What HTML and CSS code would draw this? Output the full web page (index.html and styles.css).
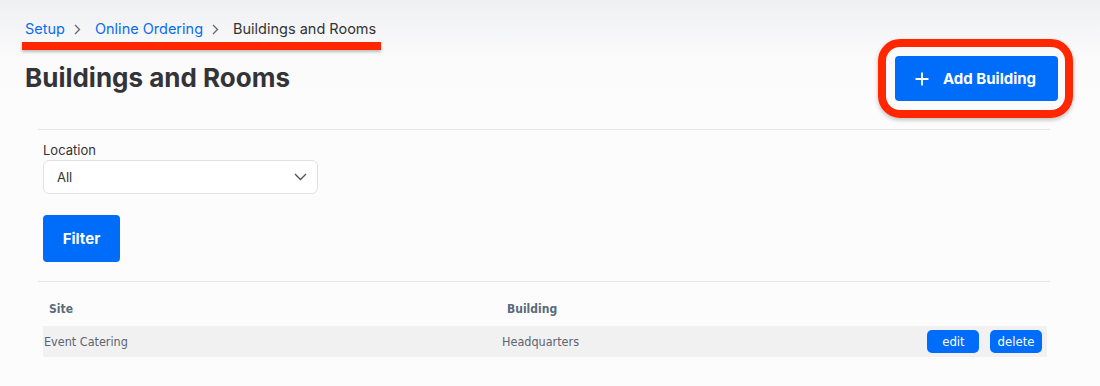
FILE: index.html
```html
<!DOCTYPE html>
<html lang="en">
<head>
  <meta charset="UTF-8">
  <meta name="viewport" content="width=device-width, initial-scale=1.0">
  <title>Buildings and Rooms</title>
  <link rel="stylesheet" href="styles.css">
</head>
<body>
  <div class="page-header">
    <div class="heading">
      <nav class="breadcrumb">
        <a href="#">Setup</a>
        <svg class="sep" width="7" height="11" viewBox="0 0 7 11" aria-hidden="true"><path d="M1 1l4.5 4.5L1 10" stroke="#666" stroke-width="1.3" fill="none"/></svg>
        <a href="#">Online Ordering</a>
        <svg class="sep" width="7" height="11" viewBox="0 0 7 11" aria-hidden="true"><path d="M1 1l4.5 4.5L1 10" stroke="#666" stroke-width="1.3" fill="none"/></svg>
        <span class="current">Buildings and Rooms</span>
      </nav>
      <h1>Buildings and Rooms</h1>
    </div>
    <button class="add-btn" type="button">
      <svg width="14" height="14" viewBox="0 0 14 14" aria-hidden="true">
        <path d="M7 0.5v13M0.5 7h13" stroke="#fff" stroke-width="1.8" fill="none"/>
      </svg>
      Add Building
    </button>
  </div>

  <div class="panel">
    <form class="filters">
      <label for="location">Location</label>
      <div class="select-box">
        <select id="location">
          <option>All</option>
        </select>
        <svg class="chevron" width="13" height="8" viewBox="0 0 13 8" aria-hidden="true">
          <path d="M1 1l5.5 5.5L12 1" stroke="#555" stroke-width="1.4" fill="none"/>
        </svg>
      </div>
      <button class="filter-btn" type="button">Filter</button>
    </form>

    <table class="list">
      <thead>
        <tr>
          <th class="col-site">Site</th>
          <th>Building</th>
          <th></th>
        </tr>
      </thead>
      <tbody>
        <tr>
          <td>Event Catering</td>
          <td>Headquarters</td>
          <td class="actions">
            <button class="small-btn" type="button">edit</button>
            <button class="small-btn" type="button">delete</button>
          </td>
        </tr>
      </tbody>
    </table>
  </div>
</body>
</html>
```

FILE: styles.css
```css
body {
  margin: 0;
  min-height: 386px;
  font-family: Inter, 'Noto Sans', sans-serif;
  color: #333338;
  background: linear-gradient(#eff0f2 0, #fafafb 55px, #fcfcfc 100px) #fcfcfc;
}

.page-header {
  display: flex;
  justify-content: space-between;
  align-items: flex-start;
  height: 129px;
  padding: 0 42px 0 25px;
}

.breadcrumb {
  position: relative;
  display: flex;
  align-items: center;
  margin-top: 19px;
  font-size: 14.5px;
  line-height: 20px;
}

/* red annotation underline */
.breadcrumb::after {
  content: '';
  position: absolute;
  left: -3px;
  top: 23px;
  width: 359px;
  height: 8px;
  background: #ff2600;
  box-shadow: 0 2px 3px rgba(0, 0, 0, 0.25);
}

.breadcrumb a {
  color: #0a6cf0;
  text-decoration: none;
}

.breadcrumb .sep {
  margin: 1px 14px 0 9px;
}

.breadcrumb .current {
  color: #333;
}

h1 {
  margin: 22px 0 0;
  font-size: 26px;
  line-height: 34px;
  font-weight: 700;
  color: #333338;
}

.add-btn {
  position: relative;
  display: flex;
  align-items: center;
  gap: 14px;
  margin-top: 56px;
  width: 163px;
  height: 45px;
  padding: 0 0 0 20px;
  border: none;
  border-radius: 4px;
  background: #006cfa;
  color: #fff;
  font-family: Inter, sans-serif;
  font-size: 15px;
  font-weight: 700;
}

/* red annotation ring */
.add-btn::after {
  content: '';
  position: absolute;
  left: -17px;
  top: -17px;
  right: -15px;
  bottom: -17px;
  border: 8px solid #ff2600;
  border-radius: 22px;
  box-shadow: 0 2px 4px rgba(0, 0, 0, 0.25);
}

.panel {
  width: 1012px;
  margin-left: 38px;
  border-top: 1px solid #e6e6e6;
}

.filters {
  padding: 12px 3px 19px 5px;
  border-bottom: 1px solid #e6e6e6;
}

.filters label {
  display: block;
  font-size: 13px;
  line-height: 16px;
  color: #333;
}

.select-box {
  position: relative;
  width: 275px;
  margin-top: 2px;
}

.select-box select {
  display: block;
  width: 100%;
  height: 34px;
  padding: 0 13px;
  border: 1px solid #e2e2e2;
  border-radius: 6px;
  background: #fff;
  font-family: Inter, sans-serif;
  font-size: 13px;
  color: #333;
  appearance: none;
}

.chevron {
  position: absolute;
  right: 11px;
  top: 13px;
}

.filter-btn {
  display: block;
  margin-top: 21px;
  width: 77px;
  height: 47px;
  border: none;
  border-radius: 4px;
  background: #006cfa;
  color: #fff;
  font-family: Inter, sans-serif;
  font-size: 15px;
  font-weight: 700;
}

.list {
  width: 1004px;
  margin: 0 3px 0 5px;
  border-collapse: collapse;
  font-family: 'DejaVu Sans Condensed', 'DejaVu Sans', sans-serif;
  font-stretch: condensed;
  font-size: 12.5px;
}

.list th {
  height: 35px;
  padding: 0 0 9px 6px;
  vertical-align: bottom;
  text-align: left;
  font-size: 12px;
  line-height: 16px;
  font-weight: 700;
  color: #5a6b7b;
}

.list .col-site {
  width: 452px;
}

.list td {
  height: 31px;
  padding: 0 0 0 1px;
  background: #f1f1f1;
  color: #5c6472;
  vertical-align: middle;
}

.list td.actions {
  text-align: right;
  padding-right: 5px;
}

.small-btn {
  width: 52px;
  height: 23px;
  margin-left: 7px;
  padding: 0;
  border: none;
  border-radius: 5px;
  background: #006cfa;
  color: #fff;
  font-family: 'DejaVu Sans Condensed', 'DejaVu Sans', sans-serif;
  font-stretch: condensed;
  font-size: 13px;
  vertical-align: middle;
}
```
